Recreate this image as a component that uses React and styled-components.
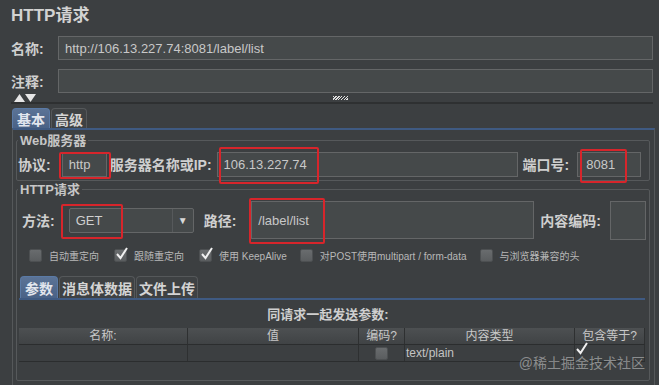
import React from "react";
import styled, { createGlobalStyle } from "styled-components";

const GlobalStyle = createGlobalStyle`
  html, body {
    margin: 0;
    padding: 0;
    background: #3c3f41;
  }
  body {
    font-family: "Liberation Sans", "Noto Sans CJK SC", sans-serif;
  }
`;

const Page = styled.div`
  width: 659px;
  height: 385px;
  overflow: hidden;
  background: #3c3f41;
  color: #c4c4c4;
  padding: 0 6px 0 11px;
  box-sizing: border-box;
`;

const Title = styled.h1`
  margin: 0;
  height: 32px;
  line-height: 32px;
  font-size: 17px;
  font-weight: bold;
  color: #d2d2d2;
`;

const FieldRow = styled.div`
  display: flex;
  align-items: center;
  height: 24px;
  margin-top: ${(p) => p.$top || 0}px;
`;

const Label = styled.span`
  font-size: 14px;
  font-weight: bold;
  color: #cfcfcf;
  white-space: nowrap;
  width: ${(p) => (p.$width ? `${p.$width}px` : "auto")};
  margin-left: ${(p) => p.$ml || 0}px;
  flex-shrink: 0;
`;

const TextBox = styled.div`
  flex: ${(p) => (p.$width ? "none" : 1)};
  width: ${(p) => (p.$width ? `${p.$width}px` : "auto")};
  height: ${(p) => p.$height || 24}px;
  margin-left: ${(p) => p.$ml || 0}px;
  box-sizing: border-box;
  background: #45494a;
  border: 1px solid #646667;
  color: #c8c8c8;
  font-size: 13px;
  display: flex;
  align-items: center;
  padding-left: ${(p) => p.$pad ?? 6}px;
  position: relative;
`;

const Splitter = styled.div`
  display: flex;
  align-items: center;
  height: 8px;
  margin-top: 1px;
  border-bottom: 2px solid #2e3031;
`;

const Arrows = styled.svg`
  margin-left: 3px;
  flex-shrink: 0;
`;

const Grip = styled.div`
  width: 15px;
  height: 4px;
  margin-left: 297px;
  background-image: repeating-linear-gradient(
    135deg,
    #e0e0e0 0 1px,
    #3c3f41 1px 2px
  );
`;

const TabBar = styled.div`
  display: flex;
  margin-top: ${(p) => p.$top || 0}px;
  margin-left: ${(p) => p.$ml || 0}px;
  height: ${(p) => p.$height || 20}px;
`;

const Tab = styled.div`
  padding: 0 ${(p) => p.$px || 4}px;
  display: flex;
  align-items: center;
  font-size: 14px;
  font-weight: bold;
  color: ${(p) => (p.$active ? "#e2e6ee" : "#d4d4d4")};
  background: ${(p) =>
    p.$active ? "linear-gradient(#5b7396, #4a6286)" : "#3e4143"};
  border: 1px solid ${(p) => (p.$active ? "#5a7aa6" : "#55585a")};
  border-bottom: none;
  border-radius: 4px 4px 0 0;
  margin-right: 1px;
`;

const Panel = styled.div`
  margin-left: 1px;
  margin-right: -2px;
  border-top: 2px solid #3f5a82;
  border-left: 1px solid #55585a;
  border-right: 1px solid #55585a;
  padding: 3px 4px 0 3px;
  height: 260px;
  box-sizing: border-box;
`;

const Group = styled.fieldset`
  margin: 0;
  margin-top: ${(p) => p.$top || 0}px;
  border: 1px solid #56595b;
  border-radius: 2px;
  padding: 0 0 ${(p) => p.$bottom || 0}px;
  height: ${(p) => (p.$height ? `${p.$height}px` : "auto")};
  box-sizing: border-box;
`;

const Legend = styled.legend`
  padding: 0 2px;
  margin-left: 1px;
  font-size: 13px;
  font-weight: bold;
  color: #c6c6c6;
  line-height: 15px;
`;

const Row = styled.div`
  display: flex;
  align-items: center;
  height: ${(p) => p.$height || 26}px;
  margin-top: ${(p) => p.$top || 0}px;
`;

const Select = styled.div`
  width: 125px;
  height: 25px;
  margin-left: 14px;
  box-sizing: border-box;
  background: #45494a;
  border: 1px solid #646667;
  border-radius: 2px;
  display: flex;
  align-items: center;
  font-size: 13px;
  color: #d0d0d0;
  position: relative;
`;

const SelectText = styled.span`
  flex: 1;
  padding-left: 6px;
`;

const SelectArrow = styled.span`
  width: 20px;
  height: 100%;
  border-left: 1px solid #56595b;
  display: flex;
  align-items: center;
  justify-content: center;
  font-size: 10px;
  color: #d8d8d8;
`;

const Mark = styled.div`
  position: absolute;
  left: ${(p) => p.$l}px;
  top: ${(p) => p.$t}px;
  width: ${(p) => p.$w}px;
  height: ${(p) => p.$h}px;
  border: 2px solid #d7252b;
  border-radius: 2px;
  box-sizing: border-box;
  pointer-events: none;
`;

const Checks = styled.div`
  display: flex;
  align-items: center;
  height: 16px;
  margin-top: 7px;
  padding-left: 12px;
`;

const CheckItem = styled.div`
  display: flex;
  align-items: center;
  margin-right: ${(p) => p.$gap || 15}px;
`;

const Box = styled.span`
  width: 13px;
  height: 13px;
  box-sizing: border-box;
  background: linear-gradient(#696c6e, #5a5d5f);
  border: 1px solid #4d5052;
  border-radius: 2px;
  position: relative;
  flex-shrink: 0;
  display: inline-block;
`;

const Tick = styled.svg`
  position: absolute;
  left: 0;
  top: -3px;
`;

const CheckText = styled.span`
  font-size: 10px;
  color: #b8b8b8;
  margin-left: 7px;
  white-space: nowrap;
`;

const SubArea = styled.div`
  margin: 0 4px 0 2px;
`;

const SubPanel = styled.div`
  border-top: 2px solid #3f5a82;
  height: 100px;
`;

const Caption = styled.div`
  text-align: center;
  font-size: 13px;
  font-weight: bold;
  color: #cfcfcf;
  height: 28px;
  line-height: 30px;
  padding-right: 8px;
`;

const Table = styled.div`
  display: grid;
  grid-template-columns: 169px 171px 46px 170px 1fr;
  border-bottom: 1px solid #2b2d2e;
`;

const HeadCell = styled.div`
  height: 16px;
  line-height: 16px;
  text-align: center;
  font-size: 12px;
  color: #c8c8c8;
  background: linear-gradient(#4d5052, #404345);
  border-right: 1px solid #2e3031;
  border-bottom: 1px solid #2b2d2e;
`;

const Cell = styled.div`
  height: 16px;
  display: flex;
  align-items: center;
  justify-content: ${(p) => (p.$center ? "center" : "flex-start")};
  font-size: 12px;
  color: #c4c4c4;
  border-right: 1px solid #2e3031;
  padding-left: ${(p) => p.$pad || 0}px;
  position: relative;
`;

const Watermark = styled.div`
  position: absolute;
  right: 14px;
  bottom: 13px;
  font-size: 14px;
  color: rgba(210, 210, 210, 0.55);
  white-space: nowrap;
  pointer-events: none;
`;

const Frame = styled.div`
  position: relative;
`;

const TickMark = ({ size = 14 }) => (
  <Tick width={size} height={size} viewBox="0 0 14 14">
    <path d="M2 7 L5.5 11 L12 1" fill="none" stroke="#f0f0f0" strokeWidth="2" />
  </Tick>
);

const Check = ({ checked, label, gap }) => (
  <CheckItem $gap={gap}>
    <Box>{checked && <TickMark />}</Box>
    <CheckText>{label}</CheckText>
  </CheckItem>
);

export default function App() {
  return (
    <Frame>
      <GlobalStyle />
      <Page>
        <Title>HTTP请求</Title>
        <FieldRow $top={4}>
          <Label $width={47}>名称:</Label>
          <TextBox>http://106.13.227.74:8081/label/list</TextBox>
        </FieldRow>
        <FieldRow $top={9}>
          <Label $width={47}>注释:</Label>
          <TextBox />
        </FieldRow>
        <Splitter>
          <Arrows width="22" height="8" viewBox="0 0 22 8">
            <path d="M0 8 L5.5 0 L11 8 Z" fill="#e6e6e6" />
            <path d="M11 0 L22 0 L16.5 8 Z" fill="#e6e6e6" />
          </Arrows>
          <Grip />
        </Splitter>
        <TabBar $top={4} $ml={1}>
          <Tab $active $px={4}>基本</Tab>
          <Tab $px={3}>高级</Tab>
        </TabBar>
        <Panel>
          <Group $bottom={3}>
            <Legend>Web服务器</Legend>
            <Row $height={26} $top={3}>
              <Label $ml={1}>协议:</Label>
              <TextBox $width={45} $ml={11} $height={25}>
                http
                <Mark $l={-4} $t={-1} $w={52} $h={27} />
              </TextBox>
              <Label $ml={3}>服务器名称或IP:</Label>
              <TextBox $width={301} $ml={5} $height={25}>
                106.13.227.74
                <Mark $l={1} $t={-6} $w={100} $h={37} />
              </TextBox>
              <Label $ml={5}>端口号:</Label>
              <TextBox $width={64} $ml={8} $height={25} $pad={8}>
                8081
                <Mark $l={2} $t={-4} $w={47} $h={34} />
              </TextBox>
            </Row>
          </Group>
          <Group $top={1} $height={199}>
            <Legend>HTTP请求</Legend>
            <Row $height={40} $top={3}>
              <Label $ml={5}>方法:</Label>
              <Select>
                <SelectText>GET</SelectText>
                <SelectArrow>▼</SelectArrow>
                <Mark $l={-9} $t={-5} $w={62} $h={35} />
              </Select>
              <Label $ml={10}>路径:</Label>
              <TextBox $width={283} $ml={15} $height={38}>
                /label/list
                <Mark $l={-3} $t={-4} $w={76} $h={46} />
              </TextBox>
              <Label $ml={6}>内容编码:</Label>
              <TextBox $width={36} $ml={9} $height={39} />
            </Row>
            <Checks>
              <Check label="自动重定向" />
              <Check checked label="跟随重定向" />
              <Check checked label="使用 KeepAlive" gap={13} />
              <Check label="对POST使用multipart / form-data" gap={13} />
              <Check label="与浏览器兼容的头" />
            </Checks>
            <SubArea>
              <TabBar $top={13} $ml={1} $height={22}>
                <Tab $active $px={4}>参数</Tab>
                <Tab $px={2}>消息体数据</Tab>
                <Tab $px={2}>文件上传</Tab>
              </TabBar>
              <SubPanel>
                <Caption>同请求一起发送参数:</Caption>
                <Table>
                  <HeadCell>名称:</HeadCell>
                  <HeadCell>值</HeadCell>
                  <HeadCell>编码?</HeadCell>
                  <HeadCell>内容类型</HeadCell>
                  <HeadCell>包含等于?</HeadCell>
                  <Cell />
                  <Cell />
                  <Cell $center>
                    <Box />
                  </Cell>
                  <Cell $pad={1}>text/plain</Cell>
                  <Cell $center>
                    <TickMark />
                  </Cell>
                </Table>
              </SubPanel>
            </SubArea>
          </Group>
        </Panel>
      </Page>
      <Watermark>@稀土掘金技术社区</Watermark>
    </Frame>
  );
}
